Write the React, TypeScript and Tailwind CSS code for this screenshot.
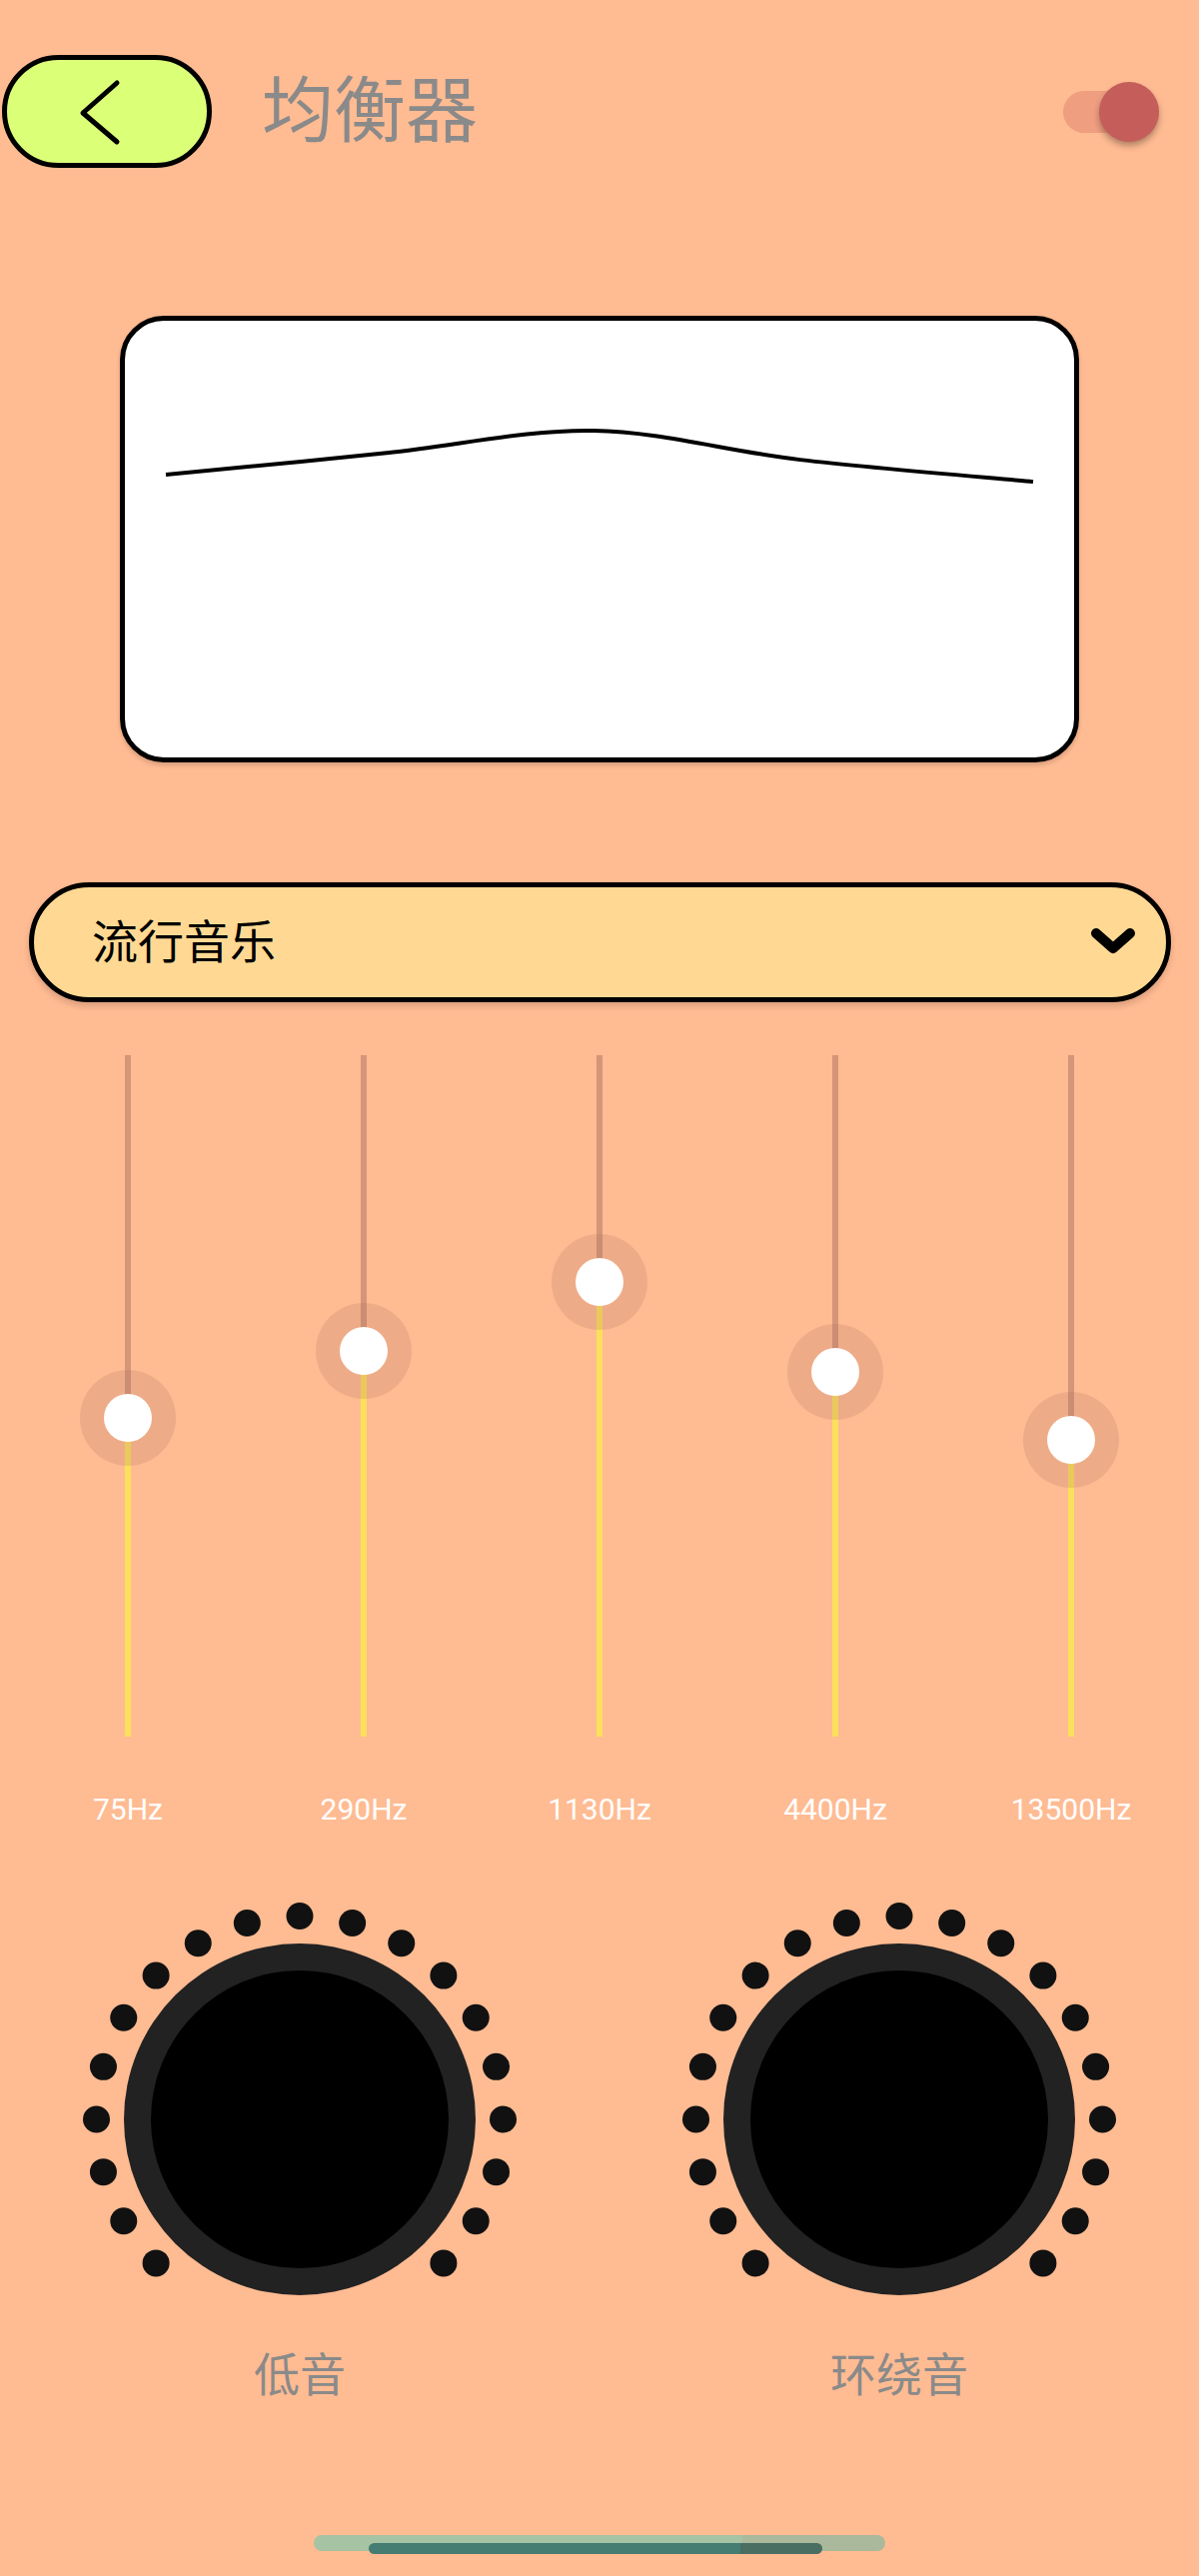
const bands = [
  { label: "75Hz", top: 363 },
  { label: "290Hz", top: 296 },
  { label: "1130Hz", top: 227 },
  { label: "4400Hz", top: 317 },
  { label: "13500Hz", top: 385 },
];

// curve points inside the card, one per band
const curveX = [41, 262, 469, 676, 909];

function curvePath() {
  const pts = bands.map((b, i) => ({ x: curveX[i], y: 154 + (b.top - 363) * 0.3235 }));
  let d = `M${pts[0].x} ${pts[0].y}`;
  for (let i = 0; i < pts.length - 1; i++) {
    const p0 = pts[i - 1] ?? pts[i];
    const p1 = pts[i];
    const p2 = pts[i + 1];
    const p3 = pts[i + 2] ?? p2;
    const c1x = p1.x + (p2.x - p0.x) / 6;
    const c1y = p1.y + (p2.y - p0.y) / 6;
    const c2x = p2.x - (p3.x - p1.x) / 6;
    const c2y = p2.y - (p3.y - p1.y) / 6;
    d += ` C${c1x} ${c1y} ${c2x} ${c2y} ${p2.x} ${p2.y}`;
  }
  return d;
}

function Knob({ label }: { label: string }) {
  const dots = [];
  for (let a = -135; a <= 135; a += 15) {
    const r = (a * Math.PI) / 180;
    dots.push(
      <circle key={a} cx={217 + 203.5 * Math.sin(r)} cy={217 - 203.5 * Math.cos(r)} r="13.5" fill="#111" />
    );
  }
  return (
    <div className="flex flex-col items-center">
      <svg width="434" height="434" viewBox="0 0 434 434">
        {dots}
        <circle cx="217" cy="217" r="176" fill="#222" />
        <circle cx="217" cy="217" r="149" fill="#000" />
      </svg>
      <div className="mt-[16px] text-[46px] leading-none text-[#8a8a8a]">{label}</div>
    </div>
  );
}

export default function App() {
  return (
    <div className="flex min-h-[2578px] w-full flex-col bg-[#FFBB92] font-['Roboto','Noto_Sans_CJK_SC',sans-serif]">
      {/* header */}
      <div className="mt-[55px] flex h-[113px] items-center">
        <button className="ml-[2px] h-[113px] w-[210px] rounded-full border-[5px] border-black bg-[#DCFF78]">
          <svg viewBox="0 0 200 103" className="h-full w-full">
            <path
              d="M110 23 L76 53 L110 82"
              fill="none"
              stroke="black"
              strokeWidth="5"
              strokeLinecap="round"
              strokeLinejoin="round"
            />
          </svg>
        </button>
        <h1 className="ml-[50px] text-[72px] font-normal leading-none text-[#8a8a8a]">均衡器</h1>
        <div className="relative ml-auto mr-[40px] h-[42px] w-[96px] rounded-full bg-[#EF9E80]">
          <div className="absolute left-[36px] top-1/2 h-[60px] w-[60px] -translate-y-1/2 rounded-full bg-[#C55E5B] shadow-[0_4px_6px_rgba(0,0,0,0.3)]" />
        </div>
      </div>

      {/* curve card */}
      <div className="ml-[120px] mt-[148px] h-[447px] w-[960px] rounded-[44px] border-[5px] border-black bg-white shadow-[0_3px_4px_rgba(0,0,0,0.15)]">
        <svg viewBox="0 0 950 437" className="h-full w-full">
          <path d={curvePath()} fill="none" stroke="black" strokeWidth="4" />
        </svg>
      </div>

      {/* preset dropdown */}
      <div className="ml-[29px] mr-[28px] mt-[120px] flex h-[120px] items-center justify-between rounded-full border-[5px] border-black bg-[#FFD993] pl-[58px] pr-[27px] shadow-[0_4px_6px_rgba(0,0,0,0.15)]">
        <span className="text-[46px] leading-none text-black">流行音乐</span>
        <svg width="54" height="36" viewBox="0 0 54 36">
          <path
            d="M11 9 L28 24 L45 9"
            fill="none"
            stroke="black"
            strokeWidth="10"
            strokeLinecap="round"
            strokeLinejoin="round"
          />
        </svg>
      </div>

      {/* sliders */}
      <div className="mt-[53px] grid grid-cols-5 px-[10px]">
        {bands.map((b) => (
          <div key={b.label} className="flex justify-center">
            <div className="relative flex h-[682px] w-[6px] flex-col">
              <div className="bg-[#AA7060]/50" style={{ height: b.top }} />
              <div className="flex-1 bg-[#FBE05C]" />
              <div
                className="absolute left-1/2 flex h-[96px] w-[96px] -translate-x-1/2 -translate-y-1/2 items-center justify-center rounded-full bg-[#AA7060]/20"
                style={{ top: b.top }}
              >
                <div className="h-[48px] w-[48px] rounded-full bg-white" />
              </div>
            </div>
          </div>
        ))}
      </div>
      <div className="mt-[55px] grid grid-cols-5 px-[10px] text-center text-[30px] leading-[36px] text-white">
        {bands.map((b) => (
          <div key={b.label}>{b.label}</div>
        ))}
      </div>

      {/* knobs */}
      <div className="mt-[75px] grid grid-cols-2">
        <Knob label="低音" />
        <Knob label="环绕音" />
      </div>

      {/* home indicator */}
      <div className="relative mx-auto mt-[137px] h-[16px] w-[572px] rounded-full bg-[linear-gradient(to_right,#A6C3A3_75%,#AAB89B_75%)]">
        <div className="absolute left-[55px] top-[8px] h-[11px] w-[454px] rounded-full bg-[linear-gradient(to_right,#467D73_82%,#4A6E62_82%)]" />
      </div>
    </div>
  );
}
